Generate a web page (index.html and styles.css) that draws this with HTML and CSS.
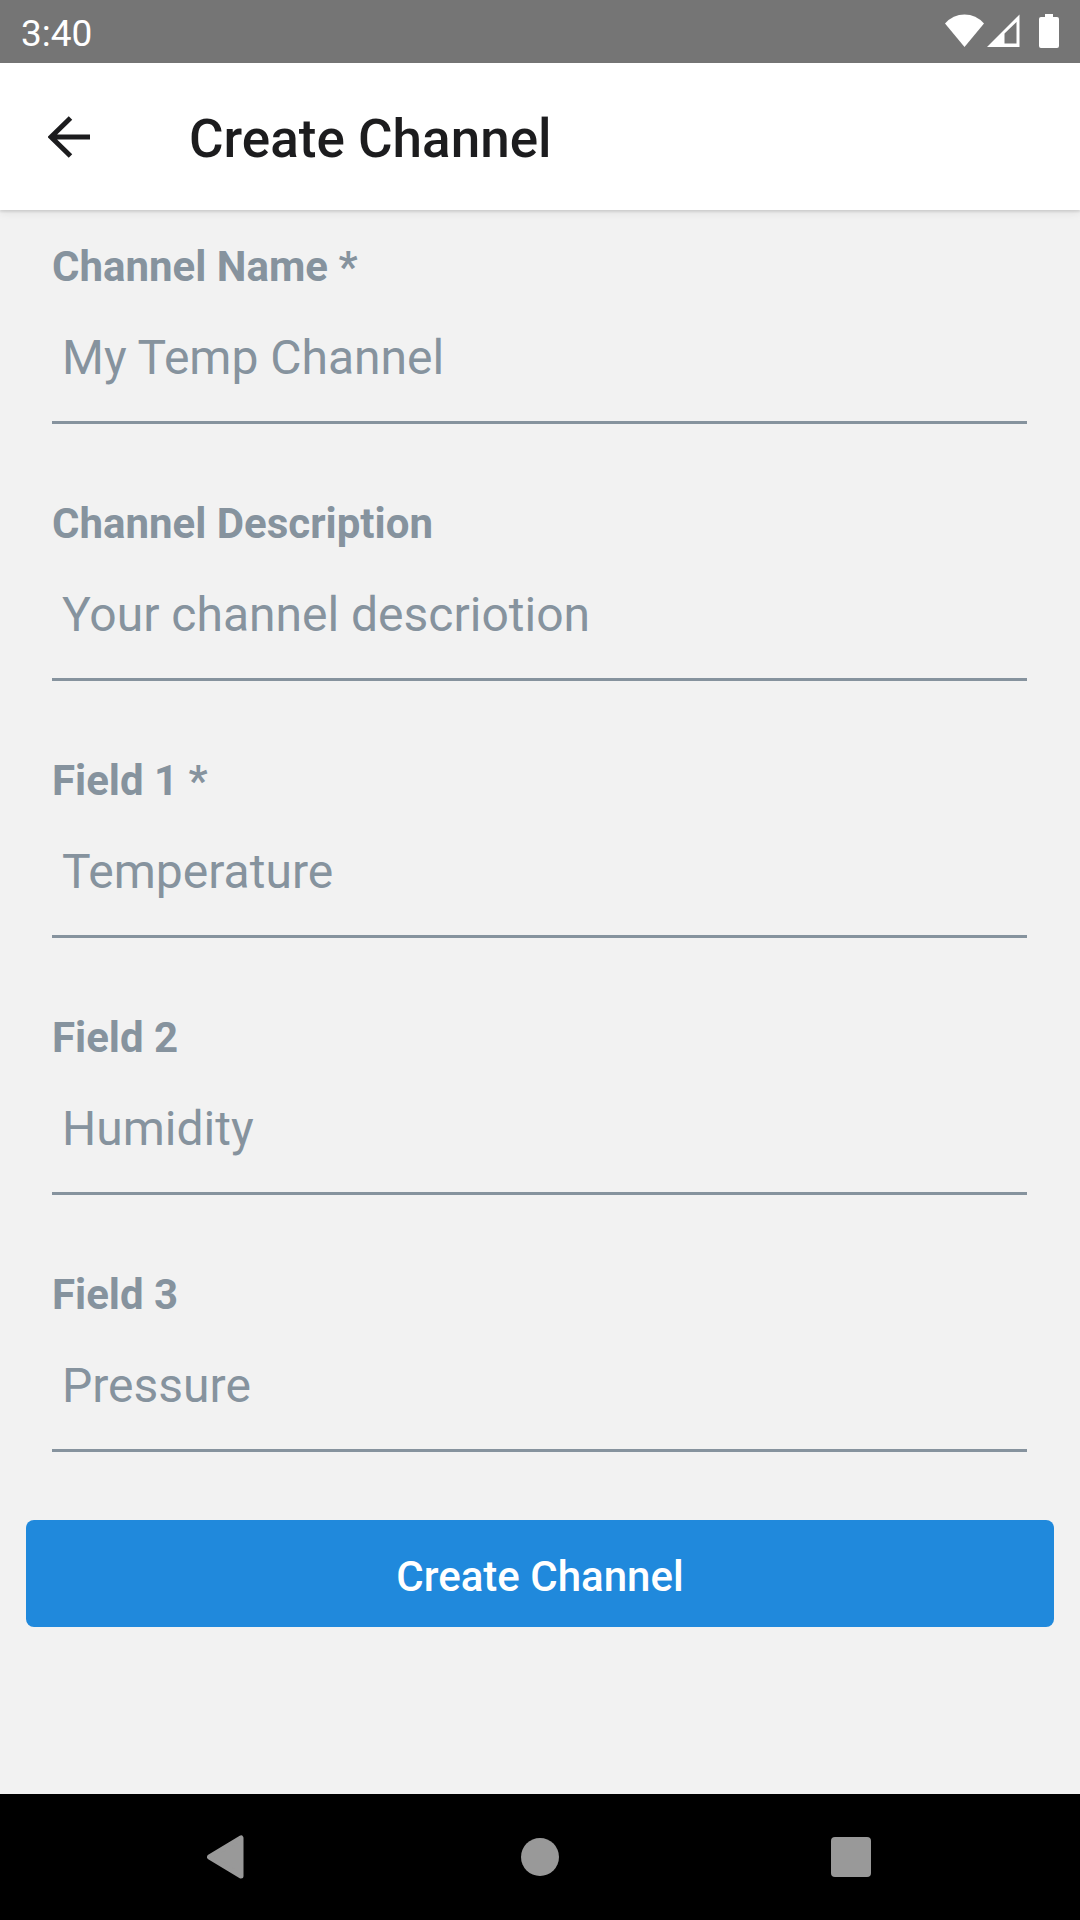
FILE: index.html
```html
<!DOCTYPE html>
<html lang="en">
<head>
    <meta charset="UTF-8">
    <meta name="viewport" content="width=device-width, initial-scale=1.0">
    <title>Create Channel</title>
    <link rel="stylesheet" href="styles.css">
</head>
<body>
    <div class="status-bar">
        <span class="clock">3:40</span>
        <div class="status-icons">
            <!-- Wifi -->
            <svg width="39" height="34" viewBox="0 0 39 34">
                <path d="M0 9.5 Q8 0.5 19.5 0.5 Q31 0.5 39 9.5 L19.5 33 Z" fill="#fff" />
            </svg>
            <!-- Signal -->
            <svg class="signal" width="33" height="34" viewBox="0 0 33 34">
                <path fill-rule="evenodd" d="M0 33 L32.5 0.5 V33 Z M17.5 19.5 V29.5 H29.5 V8 Z" fill="#fff" />
            </svg>
            <!-- Battery -->
            <svg class="battery" width="20" height="34" viewBox="0 0 20 34">
                <path d="M6 0 H14 V3 H18 Q20 3 20 5 V32 Q20 34 18 34 H2 Q0 34 0 32 V5 Q0 3 2 3 H6 Z" fill="#fff" />
            </svg>
        </div>
    </div>

    <header class="app-bar">
        <button type="button" class="back-button" aria-label="Back">
            <svg width="42" height="42" viewBox="0 0 42 42">
                <path d="M22.5 2 L3 21 L22.5 40 M3 21 H42" fill="none" stroke="#1c1c1e" stroke-width="5" />
            </svg>
        </button>
        <h1>Create Channel</h1>
    </header>

    <main>
        <form class="channel-form">
            <div class="field">
                <label for="channel-name">Channel Name *</label>
                <input type="text" id="channel-name" placeholder="My Temp Channel">
            </div>
            <div class="field">
                <label for="channel-description">Channel Description</label>
                <input type="text" id="channel-description" placeholder="Your channel descriotion">
            </div>
            <div class="field">
                <label for="field-1">Field 1 *</label>
                <input type="text" id="field-1" placeholder="Temperature">
            </div>
            <div class="field">
                <label for="field-2">Field 2</label>
                <input type="text" id="field-2" placeholder="Humidity">
            </div>
            <div class="field">
                <label for="field-3">Field 3</label>
                <input type="text" id="field-3" placeholder="Pressure">
            </div>
            <button type="submit" class="submit-button">Create Channel</button>
        </form>
    </main>

    <nav class="nav-bar">
        <button type="button" aria-label="Back">
            <svg width="44" height="44" viewBox="0 0 44 44">
                <path d="M2.5 22 L34 3 V41 Z" fill="#999" stroke="#999" stroke-width="5" stroke-linejoin="round" />
            </svg>
        </button>
        <button type="button" aria-label="Home">
            <svg width="44" height="44" viewBox="0 0 44 44">
                <circle cx="22" cy="22" r="19" fill="#999" />
            </svg>
        </button>
        <button type="button" aria-label="Recent apps">
            <svg width="44" height="44" viewBox="0 0 44 44">
                <rect x="2" y="2" width="40" height="40" rx="4" fill="#999" />
            </svg>
        </button>
    </nav>
</body>
</html>
```
FILE: styles.css
```css
* {
    box-sizing: border-box;
}

body {
    font-family: Roboto, Arial, sans-serif;
    background: #f2f2f2;
    display: flex;
    flex-direction: column;
    min-height: 100vh;
    margin: 0;
}

button {
    font-family: inherit;
    border: none;
    background: none;
    padding: 0;
    cursor: pointer;
}

svg {
    display: block;
}

.status-bar {
    display: flex;
    align-items: center;
    justify-content: space-between;
    height: 63px;
    padding: 0 21px;
    background: #757575;
    color: #fff;
}

.clock {
    font-size: 37px;
    padding-top: 4px;
}

.status-icons {
    display: flex;
    padding-bottom: 2px;
}

.signal {
    margin-left: 3px;
}

.battery {
    margin-left: 19px;
}

.app-bar {
    display: flex;
    align-items: center;
    height: 147px;
    padding: 0 48px;
    background: #fff;
    box-shadow: 0 2px 2px rgba(0, 0, 0, 0.1), 0 4px 8px rgba(0, 0, 0, 0.06);
}

.app-bar h1 {
    margin: 0 0 0 99px;
    padding-top: 5px;
    font-size: 53px;
    font-weight: 500;
    color: #1c1c1e;
}

main {
    flex: 1;
    padding: 32px 26px;
}

.channel-form {
    display: flex;
    flex-direction: column;
}

.field {
    display: flex;
    flex-direction: column;
    margin: 0 27px 75px 26px;
}

.field:last-of-type {
    margin-bottom: 68px;
}

.field label {
    font-size: 42px;
    line-height: 49px;
    font-weight: bold;
    color: #86939e;
}

.field input {
    height: 133px;
    padding: 2px 10px 0;
    border: none;
    border-bottom: 3px solid #86939e;
    border-radius: 0;
    background: transparent;
    font-family: inherit;
    font-size: 48px;
    color: #242424;
    outline: none;
}

.field input::placeholder {
    color: #86939e;
    opacity: 1;
}

.submit-button {
    height: 107px;
    padding-top: 6px;
    border-radius: 8px;
    background: #2089dc;
    color: #fff;
    font-size: 42px;
    font-weight: 500;
}

.nav-bar {
    display: grid;
    grid-template-columns: repeat(3, 1fr);
    height: 126px;
    padding: 0 73px;
    background: #000;
}

.nav-bar button {
    display: flex;
    align-items: center;
    justify-content: center;
}
```
